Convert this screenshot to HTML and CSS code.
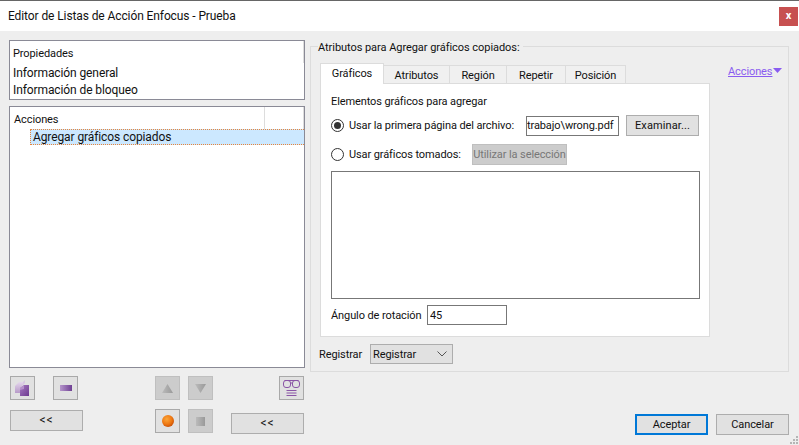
FILE: index.html
```html
<!DOCTYPE html>
<html lang="es">
<head>
<meta charset="utf-8">
<title>Editor de Listas de Acción Enfocus - Prueba</title>
<link rel="stylesheet" href="styles.css">
</head>
<body>
<div class="window">
  <header class="titlebar">
    <span class="title">Editor de Listas de Acción Enfocus - Prueba</span>
    <button class="close">x</button>
  </header>
  <main class="content">
    <section class="left">
      <div class="props">
        <div class="props-head">Propiedades</div>
        <div class="props-item first">Información general</div>
        <div class="props-item">Información de bloqueo</div>
      </div>
      <div class="actions">
        <div class="actions-head"><span>Acciones</span><i class="col"></i></div>
        <div class="actions-row">Agregar gráficos copiados</div>
      </div>
      <div class="tools">
        <button class="ib">
          <svg width="15" height="16" viewBox="0 0 15 16"><defs><linearGradient id="p1" x1="0" y1="0" x2="1" y2="1"><stop offset="0" stop-color="#a679c0"/><stop offset="1" stop-color="#6d3a90"/></linearGradient><linearGradient id="p2" x1="0" y1="0" x2="0" y2="1"><stop offset="0" stop-color="#e4d6ec"/><stop offset="1" stop-color="#b79ac8"/></linearGradient></defs><path d="M0 6 4 2h4v3L5 8v5H0z" fill="url(#p2)"/><path d="M5 8l3-3V2l2-2v3z" fill="#d8c8e2"/><path d="M5 8 9 5h5v11H5z" fill="url(#p1)"/><path d="M9 5v4l-4 1V8z" fill="#b58fcb"/></svg>
        </button>
        <button class="ib minus">
          <svg width="12" height="6" viewBox="0 0 12 6"><defs><linearGradient id="p3" x1="0" y1="0" x2="1" y2="0"><stop offset="0" stop-color="#b596cb"/><stop offset="1" stop-color="#6f3f93"/></linearGradient></defs><rect width="12" height="6" fill="url(#p3)"/></svg>
        </button>
        <button class="ib off up">
          <svg width="11" height="9" viewBox="0 0 11 9"><defs><linearGradient id="g1" x1="0" y1="0" x2="1" y2="0"><stop offset="0" stop-color="#bbb"/><stop offset="1" stop-color="#999"/></linearGradient></defs><path d="M5.5 0 11 9H0z" fill="url(#g1)"/></svg>
        </button>
        <button class="ib off">
          <svg width="11" height="9" viewBox="0 0 11 9"><path d="M0 0h11L5.5 9z" fill="url(#g1)"/></svg>
        </button>
        <button class="ib glasses">
          <svg width="17" height="16" viewBox="0 0 17 16" fill="none" stroke="#8a55a6"><path d="M1.500.5h14"/><rect x=".5" y=".5" width="7" height="7" rx="2.500"/><rect x="9.500" y=".5" width="7" height="7" rx="2.500"/><path d="M7.500 3h2M3.500 10.500h10M3.500 13h10M3.500 15.500h10"/></svg>
        </button>
      </div>
      <div class="tools second">
        <button class="btn wide">&lt;&lt;</button>
        <div class="tool-pair">
          <button class="ib">
            <svg width="12" height="12" viewBox="0 0 12 12"><defs><radialGradient id="o1" cx=".4" cy=".35" r=".7"><stop offset="0" stop-color="#fba63a"/><stop offset=".6" stop-color="#ee7812"/><stop offset="1" stop-color="#c74d05"/></radialGradient></defs><circle cx="6" cy="6" r="6" fill="url(#o1)"/></svg>
          </button>
          <button class="ib off">
            <svg width="9" height="9" viewBox="0 0 9 9"><rect width="9" height="9" fill="url(#g1)"/></svg>
          </button>
        </div>
        <button class="btn wide low">&lt;&lt;</button>
      </div>
    </section>
    <section class="right">
      <fieldset class="group">
        <legend>Atributos para Agregar gráficos copiados:</legend>
        <div class="tab-area">
          <div class="tabset">
            <nav class="tabs">
              <span class="tab active">Gráficos</span>
              <span class="tab t2">Atributos</span>
              <span class="tab t3">Región</span>
              <span class="tab t4">Repetir</span>
              <span class="tab t5">Posición</span>
            </nav>
            <div class="panel">
              <div class="panel-title">Elementos gráficos para agregar</div>
              <div class="row r1">
                <span class="radio on"></span>
                <span class="lbl">Usar la primera página del archivo:</span>
                <input class="field file" value="trabajo\wrong.pdf">
                <button class="btn browse">Examinar...</button>
              </div>
              <div class="row r2">
                <span class="radio"></span>
                <span class="lbl">Usar gráficos tomados:</span>
                <button class="btn disabled">Utilizar la selección</button>
              </div>
              <div class="textarea"></div>
              <div class="row r3">
                <span class="angle-lbl">Ángulo de rotación</span>
                <input class="field angle" value="45">
              </div>
            </div>
          </div>
          <a class="link">Acciones<svg width="9" height="5" viewBox="0 0 9 5"><path d="M0 0h9L4.500 5z" fill="#8a5cf0"/></svg></a>
        </div>
        <div class="register">
          <span class="reg-lbl">Registrar</span>
          <div class="select"><span>Registrar</span><svg width="10" height="6" viewBox="0 0 10 6" fill="none" stroke="#555"><path d="M.5.500 5 5 9.500.500"/></svg></div>
        </div>
      </fieldset>
      <div class="footer">
        <button class="btn foot default">Aceptar</button>
        <button class="btn foot">Cancelar</button>
      </div>
    </section>
  </main>
  <svg class="grip" width="8" height="8" viewBox="0 0 8 8" fill="#b5b5b5"><rect x="6" width="2" height="2"/><rect x="3" y="3" width="2" height="2"/><rect x="6" y="3" width="2" height="2"/><rect y="6" width="2" height="2"/><rect x="3" y="6" width="2" height="2"/><rect x="6" y="6" width="2" height="2"/></svg>
</div>
</body>
</html>
```
FILE: styles.css
```css
* { box-sizing: border-box; }
html, body { margin: 0; padding: 0; }
body {
  width: 799px; height: 445px; overflow: hidden;
  font-family: Roboto, "Noto Sans", sans-serif;
  font-size: 11px; letter-spacing: -0.1px; color: #111; background: #eee; white-space: nowrap;
}
button, input { font: inherit; letter-spacing: inherit; color: inherit; margin: 0; }
.window { position: relative; width: 799px; height: 445px; display: flex; flex-direction: column; }
.titlebar {
  height: 31px; flex: none; background: #fff; border-top: 1px solid #666;
  display: flex; align-items: center; justify-content: space-between;
  padding: 0 1px 0 8px;
}
.title { font-size: 12px; }
.close {
  width: 19px; height: 19px; padding: 0 0 2px; border: 0; background: #c75050; color: #fff;
  font-weight: 700; font-size: 11px; line-height: 1;
}
.content { flex: 1; display: flex; padding: 9px 10px 0 9px; gap: 5px; }
.left { width: 296px; flex: none; display: flex; flex-direction: column; }
.props {
  height: 60px; background: #fff; border: 1px solid #8a8a96; padding: 0 0 0 3px;
  line-height: 16px;
}
.props-head { height: 22px; padding-top: 5px; border-right: 1px solid #ddd; }
.props-item { font-size: 12px; }
.props-item.first { margin-top: 2px; margin-bottom: 1px; }
.actions {
  height: 262px; margin-top: 6px; background: #fff; border: 1px solid #8a8a96;
}
.actions-head { height: 22px; display: flex; justify-content: space-between; padding: 5px 0 0 4px; line-height: 16px; }
.col { width: 40px; height: 22px; margin-top: -5px; border-left: 1px solid #ddd; border-right: 1px solid #ddd; }
.actions-row {
  height: 14px; margin-left: 20px; padding-left: 2px; line-height: 15px; background: #cce8ff; font-size: 12px;
  border: 1px dotted #e8853a; border-width: 1px 0 1px 1px; box-sizing: content-box;
}
.tools { display: flex; margin-top: 8px; padding-left: 1px; }
.ib {
  width: 25px; height: 24px; padding: 0; flex: none; border: 1px solid #a9a9a9; background: #e1e1e1;
  display: flex; align-items: center; justify-content: center; margin-right: 18px;
}
.ib.off { background: #ccc; border-color: #bfbfbf; margin-right: 8px; }
.ib.minus { margin-right: 77px; }
.ib.off + .ib.glasses { margin-left: 58px; margin-right: 0; }
.second { margin-top: 9px; align-items: flex-start; }
.tool-pair { display: flex; margin-left: 72px; margin-right: 10px; }
.tool-pair .ib:first-child { margin-right: 8px; }
.btn {
  height: 21px; padding: 0; border: 1px solid #adadad; background: #e1e1e1; line-height: 17px;
}
.wide { width: 73px; margin-top: 1px; font-size: 12px; letter-spacing: 1px; }
.low { margin-top: 4px; }
.right { flex: 1; display: flex; flex-direction: column; min-width: 0; }
.group {
  margin: 0; padding: 0 0 0 8px; height: 326px; margin-top: 6px; border: 1px solid #dcdcdc;
  min-width: 0; position: relative;
}
legend { line-height: 16px; position: absolute; top: -7px; left: 7px; background: #eee; padding: 0 3px 0 0; letter-spacing: -0.05px; }
.tab-area { display: flex; padding: 16px 0 0 1px; }
.tabset { width: 390px; flex: none; }
.tabs { display: flex; height: 20px; align-items: flex-end; }
.tab {
  height: 18px; background: #f0f0f0; border: 1px solid #dcdcdc; border-left: 0; border-bottom: 0;
  line-height: 19px; text-align: center;
}
.tab.active { width: 64px; background: #fff; border-left: 1px solid #dcdcdc; line-height: 20px; position: relative; z-index: 1; margin-bottom: -1px; height: 21px; }
.t2 { width: 66px; }
.t3 { width: 57px; }
.t4 { width: 59px; }
.t5 { width: 60px; }
.panel { height: 254px; background: #fff; border: 1px solid #dcdcdc; padding: 10px 10px 0; }
.panel-title { line-height: 16px; }
.row { display: flex; align-items: center; }
.r1 { margin-top: 5px; height: 21px; }
.r2 { margin-top: 8px; height: 21px; }
.radio {
  width: 13px; height: 13px; flex: none; border: 1px solid #333; border-radius: 50%; background: #fff;
  display: flex; align-items: center; justify-content: center; margin-right: 5px;
}
.radio.on::after { content: ""; width: 7px; height: 7px; border-radius: 50%; background: #333; }
.r1 .lbl { width: 177px; }
.r2 .lbl { width: 123px; }
.field { border: 1px solid #777; background: #fff; height: 20px; padding: 0; outline: 0; }
.file { width: 93px; }
.browse { width: 73px; margin-left: 7px; letter-spacing: 0.1px; }
.disabled { width: 95px; background: #ccc; border-color: #bfbfbf; color: #777; }
.textarea { width: 369px; height: 128px; margin-top: 6px; background: #fff; border: 1px solid #777; }
.r3 { margin-top: 6px; height: 20px; }
.angle-lbl { width: 96px; padding-top: 1px; }
.angle { width: 80px; padding-left: 2px; }
.link { margin: 0 0 0 18px; height: 18px; color: #8a5cf0; text-decoration: underline; display: flex; gap: 1px; align-items: flex-start; line-height: 17px; }
.link svg { margin-top: 5px; }
.register { display: flex; align-items: center; margin-top: 7px; height: 20px; }
.reg-lbl { width: 51px; }
.select {
  width: 83px; height: 20px; background: #e1e1e1; border: 1px solid #adadad;
  display: flex; align-items: center; justify-content: space-between; padding: 0 5px 0 2px;
}
.footer { display: flex; justify-content: flex-end; gap: 8px; margin-top: 42px; }
.foot { width: 73px; }
.default { border: 2px solid #0078d7; }
.grip { position: absolute; right: 1px; bottom: 1px; }
```
